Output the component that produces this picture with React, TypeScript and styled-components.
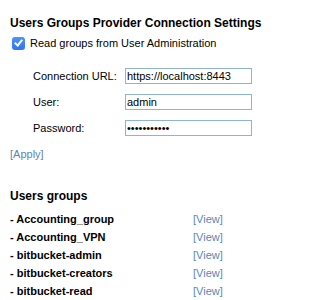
import styled, { createGlobalStyle } from "styled-components";

const GlobalStyle = createGlobalStyle`
  body {
    margin: 0;
    background: #ffffff;
    font-family: "Liberation Sans", Arial, sans-serif;
    color: #000000;
  }
`;

const Page = styled.div`
  padding: 15px 10px 0 10px;
`;

const Title = styled.h2`
  margin: 0;
  font-size: 12px;
  line-height: 16px;
  font-weight: 700;
`;

const CheckRow = styled.label`
  display: flex;
  align-items: center;
  gap: 5px;
  margin: 4px 0 0 2px;
  font-size: 11px;
  line-height: 16px;
`;

const Check = styled.input`
  appearance: none;
  margin: 0;
  width: 13px;
  height: 13px;
  border-radius: 3px;
  background: linear-gradient(#4f93f7, #2f76ee);
  position: relative;
  flex-shrink: 0;

  &:checked::after {
    content: "";
    position: absolute;
    left: 4px;
    top: 1.5px;
    width: 3px;
    height: 6px;
    border: solid #ffffff;
    border-width: 0 2px 2px 0;
    transform: rotate(40deg);
  }
`;

const Form = styled.div`
  display: grid;
  grid-template-columns: 92px 127px;
  row-gap: 10px;
  align-items: center;
  margin: 17px 0 0 23px;
`;

const Label = styled.span`
  font-size: 11px;
  line-height: 16px;
`;

const Field = styled.input`
  box-sizing: border-box;
  width: 127px;
  height: 16px;
  margin: 0;
  padding: 0 1px;
  border: 1px solid #8fb3d6;
  font-family: "Liberation Sans", Arial, sans-serif;
  font-size: 11px;
  color: #000000;
  outline: none;
`;

const Link = styled.a<{ $line?: number }>`
  color: #5a86b4;
  font-size: 11px;
  line-height: ${(p) => p.$line ?? 14}px;
  text-decoration: none;
  cursor: pointer;
`;

const ApplyRow = styled.div`
  margin-top: 10px;
  line-height: 14px;
`;

const Heading = styled.h3`
  margin: 27px 0 0 0;
  font-size: 12px;
  line-height: 16px;
  font-weight: 700;
`;

const GroupList = styled.div`
  margin-top: 6px;
  display: grid;
  grid-template-columns: 183px auto;
`;

const GroupName = styled.span`
  font-size: 11px;
  font-weight: 700;
  line-height: 18px;
`;

const groups = [
  "Accounting_group",
  "Accounting_VPN",
  "bitbucket-admin",
  "bitbucket-creators",
  "bitbucket-read",
];

export default function App() {
  return (
    <Page>
      <GlobalStyle />
      <Title>Users Groups Provider Connection Settings</Title>
      <CheckRow>
        <Check type="checkbox" defaultChecked />
        Read groups from User Administration
      </CheckRow>
      <Form>
        <Label>Connection URL:</Label>
        <Field type="text" defaultValue="https://localhost:8443" readOnly />
        <Label>User:</Label>
        <Field type="text" defaultValue="admin" readOnly />
        <Label>Password:</Label>
        <Field type="password" defaultValue="secretpass1" readOnly />
      </Form>
      <ApplyRow>
        <Link>[Apply]</Link>
      </ApplyRow>
      <Heading>Users groups</Heading>
      <GroupList>
        {groups.map((g) => (
          <>
            <GroupName key={g}>- {g}</GroupName>
            <Link key={g + "-view"} $line={18}>
              [View]
            </Link>
          </>
        ))}
      </GroupList>
    </Page>
  );
}
